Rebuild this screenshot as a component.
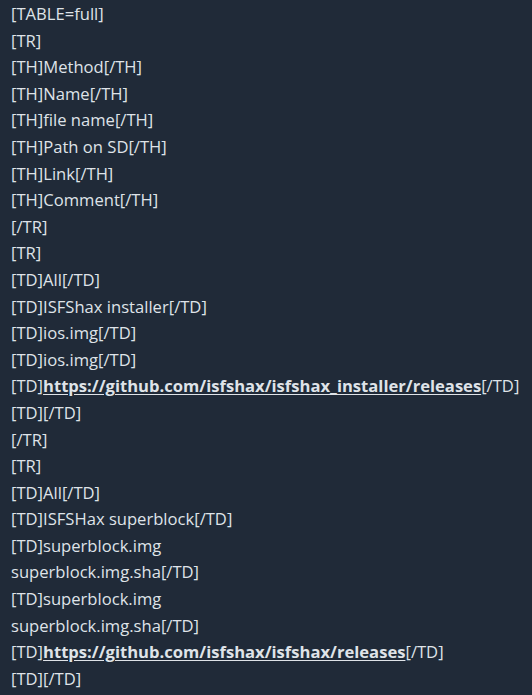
import React from "react";

type Line = { pre: string; link?: string; post?: string };

const lines: Line[] = [
  { pre: "[TABLE=full]" },
  { pre: "[TR]" },
  { pre: "[TH]Method[/TH]" },
  { pre: "[TH]Name[/TH]" },
  { pre: "[TH]file name[/TH]" },
  { pre: "[TH]Path on SD[/TH]" },
  { pre: "[TH]Link[/TH]" },
  { pre: "[TH]Comment[/TH]" },
  { pre: "[/TR]" },
  { pre: "[TR]" },
  { pre: "[TD]All[/TD]" },
  { pre: "[TD]ISFShax installer[/TD]" },
  { pre: "[TD]ios.img[/TD]" },
  { pre: "[TD]ios.img[/TD]" },
  { pre: "[TD]", link: "https://github.com/isfshax/isfshax_installer/releases", post: "[/TD]" },
  { pre: "[TD][/TD]" },
  { pre: "[/TR]" },
  { pre: "[TR]" },
  { pre: "[TD]All[/TD]" },
  { pre: "[TD]ISFSHax superblock[/TD]" },
  { pre: "[TD]superblock.img" },
  { pre: "superblock.img.sha[/TD]" },
  { pre: "[TD]superblock.img" },
  { pre: "superblock.img.sha[/TD]" },
  { pre: "[TD]", link: "https://github.com/isfshax/isfshax/releases", post: "[/TD]" },
  { pre: "[TD][/TD]" },
];

export default function App() {
  return (
    <div className="w-[532px] h-[695px] overflow-hidden bg-[#202a38] text-[#dfe3e8] pl-[11px] pt-[1px] text-[16.6px] leading-[26.6px] [font-family:'Open_Sans',sans-serif]">
      {lines.map((l, i) => (
        <div key={i} className="whitespace-nowrap">
          {l.pre}
          {l.link && (
            <a href="#" className="font-bold underline underline-offset-[2px] text-[#dfe3e8]">
              {l.link}
            </a>
          )}
          {l.post}
        </div>
      ))}
    </div>
  );
}
